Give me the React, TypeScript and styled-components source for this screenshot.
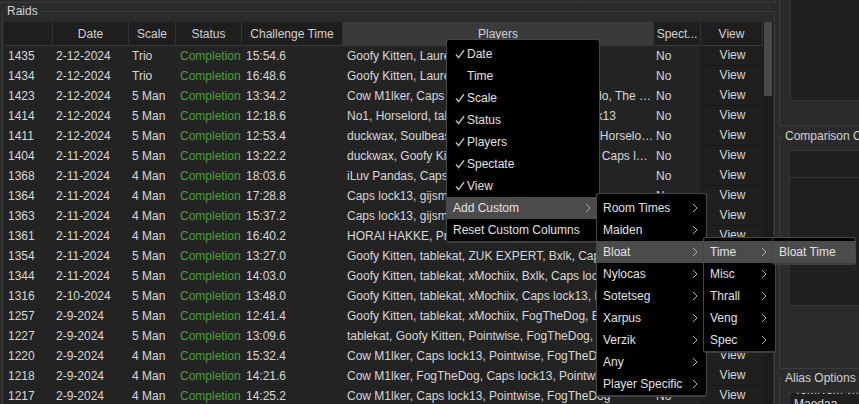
import React from "react";
import styled, { createGlobalStyle } from "styled-components";

const GlobalStyle = createGlobalStyle`
  html, body { margin: 0; padding: 0; background: #2b2b2b; }
  body {
    font-family: "Liberation Sans", Arial, sans-serif;
    font-size: 12px;
    color: #d8d8d8;
    overflow: hidden;
  }
  * { box-sizing: border-box; }
`;

const COLS = "48px 76px 47px 66px 101px 311px 47px 62px";

const Screen = styled.div`
  position: relative;
  width: 859px;
  height: 404px;
  overflow: hidden;
  display: flex;
  background: #2b2b2b;
`;

const Main = styled.div`
  width: 777px;
  flex: none;
  display: flex;
  flex-direction: column;
`;

const TopStrip = styled.div`
  height: 4px;
  flex: none;
  display: flex;
  gap: 1px;
`;

const StripBox = styled.div<{ $w: number; $left?: boolean }>`
  width: ${(p) => p.$w}px;
  height: 3px;
  border-bottom: 1px solid #3c3c3c;
  border-right: 1px solid #3c3c3c;
  border-left: ${(p) => (p.$left ? "1px solid #3c3c3c" : "none")};
`;

const Fieldset = styled.fieldset`
  margin: 0 2px 0 2px;
  padding: 4px 1px 0 1px;
  border: 1px solid #3c3c3c;
  min-width: 0;
  flex: 1;
  min-height: 0;
`;

const Legend = styled.legend`
  padding: 0 3px;
  margin: 0;
  line-height: 14px;
  color: #d4d4d4;
  white-space: nowrap;
`;

const TableBox = styled.div`
  display: flex;
  height: 400px;
  border-left: 1px solid #1a1a1a;
  border-right: 1px solid #1a1a1a;
  background: #232323;
`;

const TableMain = styled.div`
  width: 758px;
  flex: none;
  display: flex;
  flex-direction: column;
`;

const Scrollbar = styled.div`
  width: 9px;
  flex: none;
  background: #1b1b1b;
  padding-left: 1px;
`;

const Thumb = styled.div`
  height: 74px;
  background: #4a4a4a;
`;

const HeaderRow = styled.div`
  display: grid;
  grid-template-columns: ${COLS};
  height: 24px;
  flex: none;
`;

const HeaderCell = styled.div<{ $active?: boolean }>`
  display: flex;
  align-items: center;
  justify-content: center;
  background: ${(p) => (p.$active ? "#3a3a3a" : "#1e1e1e")};
  border-right: 1px solid #333;
  border-bottom: 1px solid #3a3a3a;
  color: #d2d2d2;
  white-space: nowrap;
  overflow: hidden;
`;

const Row = styled.div`
  display: grid;
  grid-template-columns: ${COLS};
  height: 20px;
  flex: none;
`;

const Cell = styled.div<{ $green?: boolean; $pl?: number }>`
  padding-left: ${(p) => p.$pl ?? 3}px;
  line-height: 20px;
  white-space: nowrap;
  overflow: hidden;
  text-overflow: ellipsis;
  color: ${(p) => (p.$green ? "#4e9e3a" : "#d8d8d8")};
`;

const ViewCell = styled.div`
  text-align: center;
  line-height: 19px;
  background: #1f1f1f;
  border-left: 1px solid #1a1a1a;
  border-bottom: 1px solid #181818;
  color: #d6d6d6;
`;

/* right side */
const Side = styled.div`
  flex: 1;
  display: flex;
  flex-direction: column;
  padding-left: 2px;
`;

const TopPanel = styled.div`
  height: 126px;
  flex: none;
  border-left: 1px solid #3c3c3c;
  border-bottom: 1px solid #3c3c3c;
  padding-left: 10px;
`;

const DarkBox = styled.div<{ $h: number }>`
  height: ${(p) => p.$h}px;
  background: #1f1f1f;
  border: 1px solid #353535;
  overflow: hidden;
`;

const TopDarkBox = styled(DarkBox)`
  border-top: none;
`;

const SideFieldset = styled.fieldset<{ $h?: number; $mt: number }>`
  margin: ${(p) => p.$mt}px 0 0 0;
  padding: 0 0 0 3px;
  border: 1px solid #3c3c3c;
  border-right: none;
  min-width: 0;
  height: ${(p) => (p.$h ? `${p.$h}px` : "auto")};
  flex: none;
`;

const SideLegend = styled.legend`
  padding: 0 2px;
  margin: 0;
  line-height: 14px;
  color: #d4d4d4;
  white-space: nowrap;
`;

const Inset = styled.div`
  margin: 7px 0 0 6px;
`;

const BoxHeader = styled.div`
  height: 27px;
  border-bottom: 1px solid #353535;
`;

const AliasList = styled.div`
  margin-top: -10px;
  padding-left: 4px;
`;

const AliasLine = styled.div`
  line-height: 14px;
  white-space: nowrap;
  color: #d8d8d8;
`;

/* menus */
const Menu = styled.div<{ $x: number; $y: number; $w: number; $z: number }>`
  position: absolute;
  left: ${(p) => p.$x}px;
  top: ${(p) => p.$y}px;
  width: ${(p) => p.$w}px;
  z-index: ${(p) => p.$z};
  background: #000;
  border: 1px solid #474747;
  border-bottom: 2px solid #3e3e3e;
  border-radius: 3px;
  padding: 3px 0 0 0;
`;

const Item = styled.div<{ $hl?: boolean; $indent?: boolean }>`
  height: 22px;
  display: flex;
  align-items: center;
  padding-left: ${(p) => (p.$indent ? 8 : 6)}px;
  padding-right: 8px;
  background: ${(p) => (p.$hl ? "#4b4b4b" : "transparent")};
  color: #e2e2e2;
  white-space: nowrap;
`;

const CheckSlot = styled.span`
  width: 12px;
  flex: none;
  display: flex;
  align-items: center;
`;

const ItemLabel = styled.span`
  flex: 1;
`;

const Check = () => (
  <svg width="10" height="10" viewBox="0 0 10 10">
    <path d="M1 5.5 L3.6 8.6 L9 1.2" fill="none" stroke="#b8b8b8" strokeWidth="1.5" />
  </svg>
);

const Chevron = () => (
  <svg width="6" height="10" viewBox="0 0 6 10">
    <polyline points="1,1 5,5 1,9" fill="none" stroke="#b0b0b0" strokeWidth="1" />
  </svg>
);

type Raid = [string, string, string, string, string];

const raids: Raid[] = [
  ["1435", "2-12-2024", "Trio", "15:54.6", "Goofy Kitten, Laurelai, Bxlk"],
  ["1434", "2-12-2024", "Trio", "16:48.6", "Goofy Kitten, Laurelai, Bxlk"],
  ["1423", "2-12-2024", "5 Man", "13:34.2", "Cow M1lker, Caps lock13, Pointwise1, FogThedo, The Goblin"],
  ["1414", "2-12-2024", "5 Man", "12:18.6", "No1, Horselord, tablekat, Soulbeast1, Caps lock13"],
  ["1411", "2-12-2024", "5 Man", "12:53.4", "duckwax, Soulbeast, Goofy Kitten, xMochiix77, Horselord, No1"],
  ["1404", "2-11-2024", "5 Man", "13:22.2", "duckwax, Goofy Kitten, tablekat, Soulbeast777, Caps lock13, No1"],
  ["1368", "2-11-2024", "4 Man", "18:03.6", "iLuv Pandas, Caps lock13, Bxlk, tablekat"],
  ["1364", "2-11-2024", "4 Man", "17:28.8", "Caps lock13, gijsmalsen, Bxlk, tablekat"],
  ["1363", "2-11-2024", "4 Man", "15:37.2", "Caps lock13, gijsmalsen, Bxlk, tablekat"],
  ["1361", "2-11-2024", "4 Man", "16:40.2", "HORAI HAKKE, Prodigy, Bxlk, tablekat"],
  ["1354", "2-11-2024", "5 Man", "13:27.0", "Goofy Kitten, tablekat, ZUK EXPERT, Bxlk, Caps lock13"],
  ["1344", "2-11-2024", "5 Man", "14:03.0", "Goofy Kitten, tablekat, xMochiix, Bxlk, Caps lock13"],
  ["1316", "2-10-2024", "5 Man", "13:48.0", "Goofy Kitten, tablekat, xMochiix, Caps lock13, Bxlk"],
  ["1257", "2-9-2024", "5 Man", "12:41.4", "Goofy Kitten, tablekat, xMochiix, FogTheDog, Bxlk"],
  ["1227", "2-9-2024", "5 Man", "13:09.6", "tablekat, Goofy Kitten, Pointwise, FogTheDog, Bxlk"],
  ["1220", "2-9-2024", "4 Man", "15:32.4", "Cow M1lker, Caps lock13, Pointwise, FogTheDog"],
  ["1218", "2-9-2024", "4 Man", "14:21.6", "Cow M1lker, FogTheDog, Caps lock13, Pointwise"],
  ["1217", "2-9-2024", "4 Man", "14:25.2", "Cow M1lker, Caps lock13, Pointwise, FogTheDog"],
];

const headers = ["", "Date", "Scale", "Status", "Challenge Time", "Players", "Spect...", "View"];

const columnItems: [string, boolean][] = [
  ["Date", true],
  ["Time", false],
  ["Scale", true],
  ["Status", true],
  ["Players", true],
  ["Spectate", true],
  ["View", true],
];

const roomItems = ["Room Times", "Maiden", "Bloat", "Nylocas", "Sotetseg", "Xarpus", "Verzik", "Any", "Player Specific"];
const bloatItems = ["Time", "Misc", "Thrall", "Veng", "Spec"];

export default function App() {
  return (
    <>
      <GlobalStyle />
      <Screen>
        <Main>
          <TopStrip>
            <StripBox $w={578} />
            <StripBox $w={197} $left />
          </TopStrip>
          <Fieldset>
            <Legend>Raids</Legend>
            <TableBox>
              <TableMain>
                <HeaderRow>
                  {headers.map((h, i) => (
                    <HeaderCell key={i} $active={h === "Players"}>
                      {h}
                    </HeaderCell>
                  ))}
                </HeaderRow>
                {raids.map((r) => (
                  <Row key={r[0]}>
                    <Cell>{r[0]}</Cell>
                    <Cell>{r[1]}</Cell>
                    <Cell>{r[2]}</Cell>
                    <Cell $green $pl={4}>Completion</Cell>
                    <Cell $pl={4}>{r[3]}</Cell>
                    <Cell $pl={4}>{r[4]}</Cell>
                    <Cell $pl={2}>No</Cell>
                    <ViewCell>View</ViewCell>
                  </Row>
                ))}
              </TableMain>
              <Scrollbar>
                <Thumb />
              </Scrollbar>
            </TableBox>
          </Fieldset>
        </Main>

        <Side>
          <TopPanel>
            <TopDarkBox $h={101} />
          </TopPanel>
          <SideFieldset $mt={3} $h={240}>
            <SideLegend>Comparison Options</SideLegend>
            <Inset>
              <DarkBox $h={156}>
                <BoxHeader />
              </DarkBox>
            </Inset>
          </SideFieldset>
          <SideFieldset $mt={2}>
            <SideLegend>Alias Options</SideLegend>
            <Inset>
              <DarkBox $h={40}>
                <AliasList>
                  <AliasLine>Tom.Tom vm</AliasLine>
                  <AliasLine>Maedaa</AliasLine>
                </AliasList>
              </DarkBox>
            </Inset>
          </SideFieldset>
        </Side>

        <Menu $x={446} $y={39} $w={154} $z={1}>
          {columnItems.map(([label, checked]) => (
            <Item key={label} $indent>
              <CheckSlot>{checked && <Check />}</CheckSlot>
              <ItemLabel>{label}</ItemLabel>
            </Item>
          ))}
          <Item $hl>
            <ItemLabel>Add Custom</ItemLabel>
            <Chevron />
          </Item>
          <Item>
            <ItemLabel>Reset Custom Columns</ItemLabel>
          </Item>
        </Menu>

        <Menu $x={596} $y={193} $w={111} $z={2}>
          {roomItems.map((label) => (
            <Item key={label} $hl={label === "Bloat"}>
              <ItemLabel>{label}</ItemLabel>
              <Chevron />
            </Item>
          ))}
        </Menu>

        <Menu $x={703} $y={237} $w={73} $z={3}>
          {bloatItems.map((label) => (
            <Item key={label} $hl={label === "Time"}>
              <ItemLabel>{label}</ItemLabel>
              <Chevron />
            </Item>
          ))}
        </Menu>

        <Menu $x={772} $y={237} $w={84} $z={4}>
          <Item $hl>
            <ItemLabel>Bloat Time</ItemLabel>
          </Item>
        </Menu>
      </Screen>
    </>
  );
}
